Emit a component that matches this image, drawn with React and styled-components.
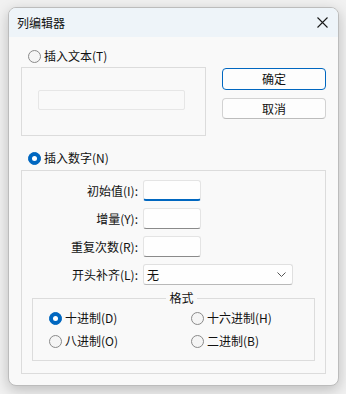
import React from 'react';
import styled, { createGlobalStyle } from 'styled-components';

const Global = createGlobalStyle`
  html, body { margin: 0; padding: 0; }
  body {
    background: #f1f1f1;
    font-family: "Noto Sans CJK SC", "Microsoft YaHei", sans-serif;
    font-size: 12px;
    color: #111;
  }
  * { box-sizing: border-box; }
`;

const Stage = styled.div`
  width: 346px;
  height: 394px;
  padding: 7px 0 0 8px;
`;

const Window = styled.div`
  width: 331px;
  height: 379px;
  border: 1px solid #bcbcbc;
  border-radius: 8px;
  overflow: hidden;
  background: #f9f9f9;
  box-shadow: 0 4px 14px rgba(0, 0, 0, 0.22);
  display: flex;
  flex-direction: column;
`;

const TitleBar = styled.div`
  height: 29px;
  flex: none;
  background: #eef4f9;
  display: flex;
  align-items: center;
  justify-content: space-between;
  padding: 0 10px 0 8px;
  font-size: 12px;
  line-height: 16px;
`;

const CloseBtn = styled.div`
  width: 12px;
  height: 12px;
  display: flex;
  align-items: center;
  justify-content: center;
`;

const Body = styled.div`
  flex: 1;
  padding: 11px 12px 12px 12px;
  display: flex;
  flex-direction: column;
`;

const TopSection = styled.div`
  display: flex;
  justify-content: space-between;
`;

const LeftCol = styled.div`
  width: 185px;
  display: flex;
  flex-direction: column;
  gap: 3px;
`;

const RightCol = styled.div`
  width: 104px;
  padding-top: 20px;
  display: flex;
  flex-direction: column;
  gap: 8px;
`;

const RadioRow = styled.label`
  display: flex;
  align-items: center;
  gap: 3px;
  height: 16px;
  line-height: 16px;
  padding-left: ${p => p.$indent || 0}px;
  white-space: nowrap;
`;

const RadioDot = styled.span`
  width: 13px;
  height: 13px;
  border-radius: 50%;
  flex: none;
  position: relative;
  background: ${p => (p.$checked ? '#0067c0' : '#f5f5f5')};
  border: 1px solid ${p => (p.$checked ? '#0067c0' : '#8a8a8a')};
  &::after {
    content: '';
    display: ${p => (p.$checked ? 'block' : 'none')};
    position: absolute;
    left: 50%;
    top: 50%;
    width: 5px;
    height: 5px;
    margin: -2.5px 0 0 -2.5px;
    border-radius: 50%;
    background: #fff;
  }
`;

const GroupBox = styled.div`
  border: 1px solid #dcdcdc;
  height: ${p => p.$h}px;
  padding: ${p => p.$pad || '0'};
`;

const DisabledText = styled.div`
  margin: 22px 0 0 16px;
  width: 147px;
  height: 20px;
  border: 1px solid #e6e6e6;
  border-radius: 2px;
  background: #f9f9f9;
`;

const Button = styled.button`
  height: ${p => p.$h}px;
  width: 104px;
  border-radius: 4px;
  background: #fdfdfd;
  border: 1px solid ${p => (p.$primary ? '#0067c0' : '#d2d2d2')};
  border-bottom-color: ${p => (p.$primary ? '#0067c0' : '#bcbcbc')};
  font-family: inherit;
  font-size: 12px;
  color: #111;
  padding: 0;
  line-height: 16px;
`;

const NumberSection = styled.div`
  margin-top: 14px;
  display: flex;
  flex-direction: column;
  gap: 4px;
`;

const FieldRows = styled.div`
  display: flex;
  flex-direction: column;
  gap: 7px;
`;

const FieldRow = styled.div`
  display: flex;
  align-items: center;
  gap: 5px;
  height: 21px;
`;

const FieldLabel = styled.span`
  width: 116px;
  text-align: right;
  white-space: nowrap;
`;

const TextInput = styled.div`
  width: 58px;
  height: 21px;
  background: #fefefe;
  border: 1px solid #e4e4e4;
  border-bottom: ${p => (p.$focused ? '2px solid #0067c0' : '1px solid #8a8a8a')};
  border-radius: 3px;
`;

const Select = styled.div`
  width: 150px;
  height: 21px;
  background: #fefefe;
  border: 1px solid #e0e0e0;
  border-bottom-color: #b8b8b8;
  border-radius: 3px;
  display: flex;
  align-items: center;
  justify-content: space-between;
  padding: 0 6px 0 3px;
`;

const Fieldset = styled.fieldset`
  margin: 5px 10px 0 10px;
  border: 1px solid #dcdcdc;
  padding: 4px 0 11px 16px;
  min-width: 0;
`;

const Legend = styled.legend`
  margin: 0 auto;
  padding: 0 3px;
  line-height: 16px;
`;

const FormatGrid = styled.div`
  display: grid;
  grid-template-columns: 142px 1fr;
  row-gap: 7px;
`;

const Radio = ({ checked, children, indent }) => (
  <RadioRow $indent={indent}>
    <RadioDot $checked={checked} />
    <span>{children}</span>
  </RadioRow>
);

export default function App() {
  return (
    <>
      <Global />
      <Stage>
        <Window>
          <TitleBar>
            <span>列编辑器</span>
            <CloseBtn>
              <svg width="11" height="11" viewBox="0 0 11 11">
                <path d="M0.5 0.5 L10.5 10.5 M10.5 0.5 L0.5 10.5" stroke="#1b1b1b" strokeWidth="1.1" />
              </svg>
            </CloseBtn>
          </TitleBar>
          <Body>
            <TopSection>
              <LeftCol>
                <Radio indent={7}>插入文本(T)</Radio>
                <GroupBox $h={69}>
                  <DisabledText />
                </GroupBox>
              </LeftCol>
              <RightCol>
                <Button $primary $h={22}>确定</Button>
                <Button $h={21}>取消</Button>
              </RightCol>
            </TopSection>
            <NumberSection>
              <Radio checked indent={7}>插入数字(N)</Radio>
              <GroupBox $h={204} $pad="9px 0 0 0">
                <FieldRows>
                  <FieldRow>
                    <FieldLabel>初始值(I):</FieldLabel>
                    <TextInput $focused />
                  </FieldRow>
                  <FieldRow>
                    <FieldLabel>增量(Y):</FieldLabel>
                    <TextInput />
                  </FieldRow>
                  <FieldRow>
                    <FieldLabel>重复次数(R):</FieldLabel>
                    <TextInput />
                  </FieldRow>
                  <FieldRow>
                    <FieldLabel>开头补齐(L):</FieldLabel>
                    <Select>
                      <span>无</span>
                      <svg width="9" height="5" viewBox="0 0 9 5">
                        <path d="M0.5 0.5 L4.5 4.5 L8.5 0.5" fill="none" stroke="#555" strokeWidth="1" />
                      </svg>
                    </Select>
                  </FieldRow>
                </FieldRows>
                <Fieldset>
                  <Legend>格式</Legend>
                  <FormatGrid>
                    <Radio checked>十进制(D)</Radio>
                    <Radio>十六进制(H)</Radio>
                    <Radio>八进制(O)</Radio>
                    <Radio>二进制(B)</Radio>
                  </FormatGrid>
                </Fieldset>
              </GroupBox>
            </NumberSection>
          </Body>
        </Window>
      </Stage>
    </>
  );
}
